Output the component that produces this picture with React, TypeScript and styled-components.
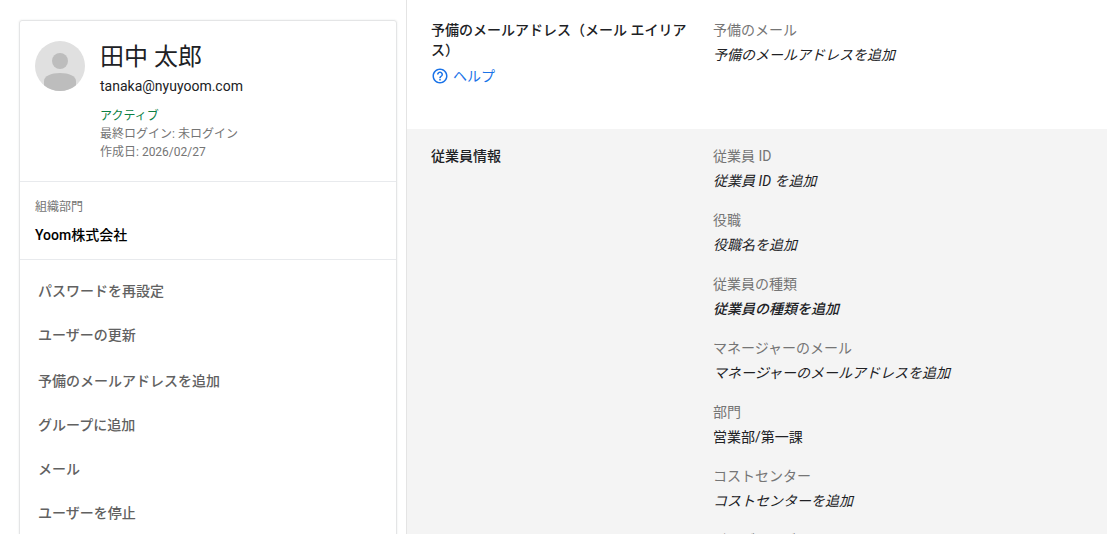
import React from 'react';
import styled, { createGlobalStyle } from 'styled-components';

const GlobalStyle = createGlobalStyle`
  * { box-sizing: border-box; }
  html, body { margin: 0; height: 100%; }
  #root { height: 100%; }
  body {
    overflow: hidden;
    background: #fff;
    color: #202124;
    font-family: Roboto, "Noto Sans CJK JP", sans-serif;
    font-size: 14px;
    line-height: 20px;
  }
  h1, h2, p, dl, dt, dd, ul { margin: 0; padding: 0; }
`;

const Page = styled.div`
  display: grid;
  grid-template-columns: 406px minmax(0, 1fr);
  height: 100vh;
  overflow: hidden;
`;

const Sidebar = styled.aside`
  padding: 20px 9px 0 19px;
`;

const Card = styled.section`
  min-height: 600px;
  border: 1px solid #e4e5e6;
  border-radius: 3px;
  box-shadow: 0 0 2px rgba(60, 64, 67, 0.12);
`;

const Profile = styled.header`
  display: flex;
  gap: 15px;
  padding: 20px 15px;
  border-bottom: 1px solid #e8eaed;
`;

const Avatar = styled.svg`
  flex: none;
  width: 50px;
  height: 50px;
`;

const Name = styled.h1`
  font-size: 24px;
  font-weight: 400;
  line-height: 32px;
`;

const Email = styled.p`
  margin-bottom: 8px;
  line-height: 26px;
`;

const Meta = styled.p<{ $active?: boolean }>`
  color: ${({ $active }) => ($active ? '#0b8043' : '#757575')};
  font-size: 12px;
  line-height: 18px;
`;

const OrgUnit = styled.div`
  padding: 15px 15px 14px;
  border-bottom: 1px solid #e8eaed;
`;

const OrgLabel = styled.p`
  margin-bottom: 8px;
  color: #757575;
  font-size: 12px;
`;

const OrgName = styled.p`
  color: #000;
  font-weight: 500;
`;

const ActionGroups = styled.nav`
  display: grid;
  gap: 2px;
  padding-top: 9px;
`;

const Actions = styled.ul`
  list-style: none;
`;

const Action = styled.button`
  display: block;
  width: 100%;
  height: 44px;
  padding: 0 18px;
  border: 0;
  background: none;
  color: #616161;
  font: inherit;
  font-weight: 500;
  text-align: left;
  cursor: pointer;
`;

const Main = styled.main`
  border-left: 1px solid #e4e4e4;
`;

const Section = styled.section<{ $shaded?: boolean }>`
  display: grid;
  grid-template-columns: 258px minmax(0, 1fr);
  column-gap: 24px;
  min-height: 129px;
  padding: ${({ $shaded }) => ($shaded ? '17px' : '20px')} 24px 24px;
  background: ${({ $shaded }) => ($shaded ? '#f4f4f4' : '#fff')};
`;

const Title = styled.h2`
  font-size: 14px;
  font-weight: 500;
  line-height: 20px;
`;

const HelpLink = styled.a`
  display: inline-flex;
  align-items: center;
  gap: 4px;
  margin-top: 6px;
  color: #1a73e8;
  text-decoration: none;
`;

const HelpIcon = styled.svg`
  width: 18px;
  height: 18px;
  fill: currentColor;
`;

const Fields = styled.dl`
  display: grid;
  align-content: start;
  gap: 19px;
`;

const Label = styled.dt`
  margin-bottom: 5px;
  color: #757575;
`;

const Value = styled.dd<{ $empty?: boolean; $strong?: boolean }>`
  font-style: ${({ $empty }) => ($empty ? 'italic' : 'normal')};
  font-weight: ${({ $strong }) => ($strong ? 500 : 400)};
`;

type FieldData = { label: string; value: string; empty?: boolean; strong?: boolean };

const actionGroups = [
  ['パスワードを再設定', 'ユーザーの更新'],
  ['予備のメールアドレスを追加', 'グループに追加', 'メール', 'ユーザーを停止'],
];

const employeeFields: FieldData[] = [
  { label: '従業員 ID', value: '従業員 ID を追加', empty: true },
  { label: '役職', value: '役職名を追加', empty: true },
  { label: '従業員の種類', value: '従業員の種類を追加', empty: true, strong: true },
  { label: 'マネージャーのメール', value: 'マネージャーのメールアドレスを追加', empty: true },
  { label: '部門', value: '営業部/第一課' },
  { label: 'コストセンター', value: 'コストセンターを追加', empty: true },
  { label: 'ビルディング ID', value: 'ビルディング ID を追加', empty: true },
];

function Field({ label, value, empty, strong }: FieldData) {
  return (
    <div>
      <Label>{label}</Label>
      <Value $empty={empty} $strong={strong}>{value}</Value>
    </div>
  );
}

export default function App() {
  return (
    <>
      <GlobalStyle />
      <Page>
        <Sidebar>
          <Card>
            <Profile>
              <Avatar viewBox="0 0 50 50" aria-hidden="true">
                <circle cx="25" cy="25" r="25" fill="#e0e0e0" />
                <circle cx="25" cy="20" r="8" fill="#bdbdbd" />
                <path d="M9 44.2V40C9 35 16 32 25 32s16 3 16 8v4.2A25 25 0 0 1 9 44.2z" fill="#bdbdbd" />
              </Avatar>
              <div>
                <Name>田中 太郎</Name>
                <Email>tanaka@nyuyoom.com</Email>
                <Meta $active>アクティブ</Meta>
                <Meta>最終ログイン: 未ログイン</Meta>
                <Meta>作成日: 2026/02/27</Meta>
              </div>
            </Profile>
            <OrgUnit>
              <OrgLabel>組織部門</OrgLabel>
              <OrgName>Yoom株式会社</OrgName>
            </OrgUnit>
            <ActionGroups>
              {actionGroups.map((group) => (
                <Actions key={group[0]}>
                  {group.map((action) => (
                    <li key={action}>
                      <Action type="button">{action}</Action>
                    </li>
                  ))}
                </Actions>
              ))}
            </ActionGroups>
          </Card>
        </Sidebar>
        <Main>
          <Section>
            <div>
              <Title>予備のメールアドレス（メール エイリアス）</Title>
              <HelpLink href="#help">
                <HelpIcon viewBox="0 0 24 24" aria-hidden="true">
                  <path d="M11 18h2v-2h-2v2zm1-16C6.48 2 2 6.48 2 12s4.48 10 10 10 10-4.48 10-10S17.52 2 12 2zm0 18c-4.41 0-8-3.59-8-8s3.59-8 8-8 8 3.59 8 8-3.59 8-8 8zm0-14c-2.21 0-4 1.79-4 4h2c0-1.1.9-2 2-2s2 .9 2 2c0 2-3 1.75-3 5h2c0-2.25 3-2.5 3-5 0-2.21-1.79-4-4-4z" />
                </HelpIcon>
                ヘルプ
              </HelpLink>
            </div>
            <Fields>
              <Field label="予備のメール" value="予備のメールアドレスを追加" empty />
            </Fields>
          </Section>
          <Section $shaded>
            <Title>従業員情報</Title>
            <Fields>
              {employeeFields.map((field) => (
                <Field key={field.label} {...field} />
              ))}
            </Fields>
          </Section>
        </Main>
      </Page>
    </>
  );
}
